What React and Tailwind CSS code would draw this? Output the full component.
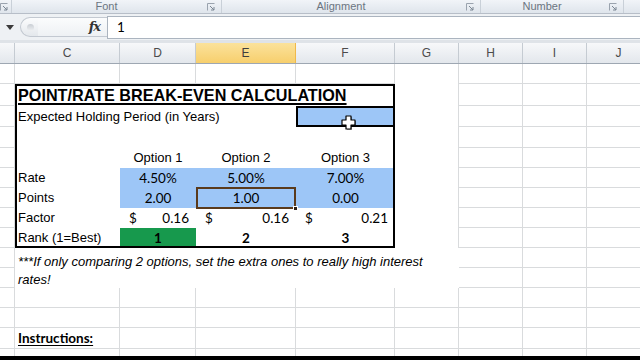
import React from 'react';

// column letters (B partial, C..J) of the visible sheet
const COLS = ['', 'C', 'D', 'E', 'F', 'G', 'H', 'I', 'J'];
const ROW_COUNT = 15;

function Launcher() {
  return (
    <svg width="8" height="8" viewBox="0 0 8 8" className="shrink-0">
      <path d="M0.5 7.5V0.5H7.5" fill="none" stroke="#9aa3ae" strokeWidth="1" />
      <path d="M3 3L7 7M7 4V7H4" fill="none" stroke="#7b8693" strokeWidth="1" />
    </svg>
  );
}

function RibbonGroup({ label, width }) {
  return (
    <div className={`flex items-center h-full border-r border-[#c9d0d8] ${width}`}>
      <div className="flex-1 text-center text-[11px] leading-none text-[#6b7581]">{label}</div>
      <div className="w-[20px] flex justify-center"><Launcher /></div>
    </div>
  );
}

function Cursor() {
  return (
    <svg width="18" height="18" viewBox="0 0 18 18" className="absolute left-[42px] top-[6px]">
      <path d="M6 2H11V6H15V11H11V15H6V11H2V6H6Z" fill="#000" opacity="0.35" transform="translate(1 1)" />
      <path d="M6 2H11V6H15V11H11V15H6V11H2V6H6Z" fill="#fff" stroke="#000" strokeWidth="1.2" strokeLinejoin="round" />
    </svg>
  );
}

function gridCell(r, c) {
  // G column next to the box and the note has no gridlines
  if (c === 5 && r <= 10) return 'border-r border-[#d9dbdd]';
  if (r === ROW_COUNT - 1) return 'border-r border-[#d9dbdd]';
  return 'border-r border-b border-[#d9dbdd]';
}

export default function App() {
  const txt = "font-['Liberation_Sans',Arial,sans-serif] text-[13px]";
  const num = "font-['Lato','Open_Sans',sans-serif] text-[13.5px]";

  const cells = [];
  for (let r = 0; r < ROW_COUNT; r++) {
    for (let c = 0; c < COLS.length; c++) {
      if (r >= 1 && r <= 8 && c >= 1 && c <= 4) continue; // calculation box
      if (r >= 9 && r <= 10 && c >= 1 && c <= 5) continue; // note
      if (r === 13 && c === 1) {
        cells.push(
          <div key="instr" className={`${gridCell(r, c)} flex items-center pl-[3px] font-bold underline underline-offset-2 ${num}`}>
            Instructions:
          </div>
        );
        continue;
      }
      cells.push(<div key={`${r}-${c}`} className={gridCell(r, c)} />);
    }
  }

  return (
    <div className="w-[640px] h-[360px] overflow-hidden bg-white flex flex-col font-['Liberation_Sans',Arial,sans-serif] text-black">
      {/* ribbon group labels */}
      <div className="h-[14px] flex bg-gradient-to-b from-[#f1f4f8] to-[#dfe5ec] border-b border-[#b7bec8] shrink-0">
        <div className="w-[12px] h-full flex items-center border-r border-[#c9d0d8]"><Launcher /></div>
        <RibbonGroup label="Font" width="w-[210px]" />
        <RibbonGroup label="Alignment" width="w-[259px]" />
        <RibbonGroup label="Number" width="w-[143px]" />
        <div className="flex-1" />
      </div>

      {/* formula bar */}
      <div className="h-[26px] flex items-center bg-[#eef1f4] shrink-0">
        <div className="w-[20px] h-full flex items-center justify-center">
          <svg width="8" height="5" viewBox="0 0 8 5"><path d="M0 0H8L4 5Z" fill="#3b3b3b" /></svg>
        </div>
        <div className="w-[87px] h-[22px] flex items-center">
          <div className="w-[18px] h-[20px] rounded-l-full border border-r-0 border-[#c3c9d1] bg-gradient-to-b from-[#fbfcfd] to-[#e4e8ec] flex items-center justify-center">
            <div className="w-[7px] h-[7px] rounded-full bg-gradient-to-b from-[#c9ced4] to-[#eef0f2] ml-[2px]" />
          </div>
          <div className="flex-1 h-[20px] border-y border-[#c3c9d1] bg-gradient-to-b from-[#fbfcfd] to-[#eef1f4] flex items-center justify-end pr-[7px]">
            <span className="font-['DejaVu_Serif',serif] italic font-bold text-[13px] text-[#333] tracking-[-1px]">fx</span>
          </div>
        </div>
        <div className="flex-1 h-[23px] bg-white border border-[#abb4bf] border-r-0 flex items-center pl-[9px]">
          <span className={num}>1</span>
        </div>
      </div>
      <div className="h-[3px] bg-[#dfe3e8] shrink-0" />

      {/* column headers */}
      <div className="h-[21px] grid grid-cols-[15px_105px_76px_100px_99px_64px_64px_64px_64px] shrink-0 border-b border-[#9ea7b2]">
        {COLS.map((c) => (
          <div
            key={c || 'B'}
            className={
              c === 'E'
                ? 'flex items-center justify-center border-r border-[#f0b94a] bg-gradient-to-b from-[#fbe29b] to-[#f7cf6c] text-[12px] text-[#3d3d3d]'
                : 'flex items-center justify-center border-r border-[#c5cbd2] bg-gradient-to-b from-[#f7f8fa] to-[#e3e7ec] text-[12px] text-[#4b4b4b]'
            }
          >
            {c}
          </div>
        ))}
      </div>

      {/* sheet */}
      <div className="grid grid-cols-[15px_105px_76px_100px_99px_64px_64px_64px_64px] grid-rows-[20px_22px_21px_21px_20px_20px_20px_20px_20px_20px_20px_20px_20px_21px_7px] shrink-0">
        {/* calculation box C3:F11 */}
        <div className="col-start-2 col-end-6 row-start-2 row-end-10 relative grid grid-cols-[105px_76px_100px_99px] grid-rows-[22px_21px_21px_20px_20px_20px_20px_20px] bg-white">
          <div className="col-span-4 flex items-center pl-[3px]">
            <span className="font-bold underline text-[16.2px] leading-none decoration-[1.5px] underline-offset-[2px]">POINT/RATE BREAK-EVEN CALCULATION</span>
          </div>

          <div className={`col-span-3 flex items-center pl-[3px] ${txt}`}>Expected Holding Period (in Years)</div>
          <div className="relative bg-[#9dc6f7] border-2 border-r-0 border-black">
            <Cursor />
          </div>

          <div className="col-span-4" />

          <div />
          <div className={`flex items-center justify-center ${txt}`}>Option 1</div>
          <div className={`flex items-center justify-center ${txt}`}>Option 2</div>
          <div className={`flex items-center justify-center ${txt}`}>Option 3</div>

          <div className={`flex items-center pl-[3px] ${txt}`}>Rate</div>
          <div className={`flex items-center justify-center bg-[#9dc6f7] ${num}`}>4.50%</div>
          <div className={`flex items-center justify-center bg-[#9dc6f7] ${num}`}>5.00%</div>
          <div className={`flex items-center justify-center bg-[#9dc6f7] ${num}`}>7.00%</div>

          <div className={`flex items-center pl-[3px] ${txt}`}>Points</div>
          <div className={`flex items-center justify-center bg-[#9dc6f7] ${num}`}>2.00</div>
          <div className={`relative flex items-center justify-center bg-[#9dc6f7] border-2 border-[#5a3a1c] -mt-[1px] -mb-[1px] ${num}`}>
            1.00
            <div className="absolute -right-[4px] -bottom-[4px] w-[5px] h-[5px] bg-[#2c2016] border border-white" />
          </div>
          <div className={`flex items-center justify-center bg-[#9dc6f7] ${num}`}>0.00</div>

          <div className={`flex items-center pl-[3px] ${txt}`}>Factor</div>
          <div className={`flex items-center justify-between pl-[9px] pr-[7px] ${num}`}><span>$</span><span>0.16</span></div>
          <div className={`flex items-center justify-between pl-[9px] pr-[7px] ${num}`}><span>$</span><span>0.16</span></div>
          <div className={`flex items-center justify-between pl-[9px] pr-[7px] ${num}`}><span>$</span><span>0.21</span></div>

          <div className={`flex items-center pl-[3px] ${txt}`}>Rank (1=Best)</div>
          <div className={`flex items-center justify-center bg-[#17994d] font-bold ${num}`}>1</div>
          <div className={`flex items-center justify-center font-bold ${num}`}>2</div>
          <div className={`flex items-center justify-center font-bold ${num}`}>3</div>

          <div className="absolute inset-0 border-[2.5px] border-black pointer-events-none" />
        </div>

        {/* note C12:G13 */}
        <div className={`col-start-2 col-end-7 row-start-10 row-end-12 pl-[3px] pr-[30px] pt-[5px] italic leading-[18px] ${txt}`}>
          ***If only comparing 2 options, set the extra ones to really high interest rates!
        </div>

        {cells}
      </div>

      <div className="h-[4px] bg-black shrink-0" />
    </div>
  );
}
